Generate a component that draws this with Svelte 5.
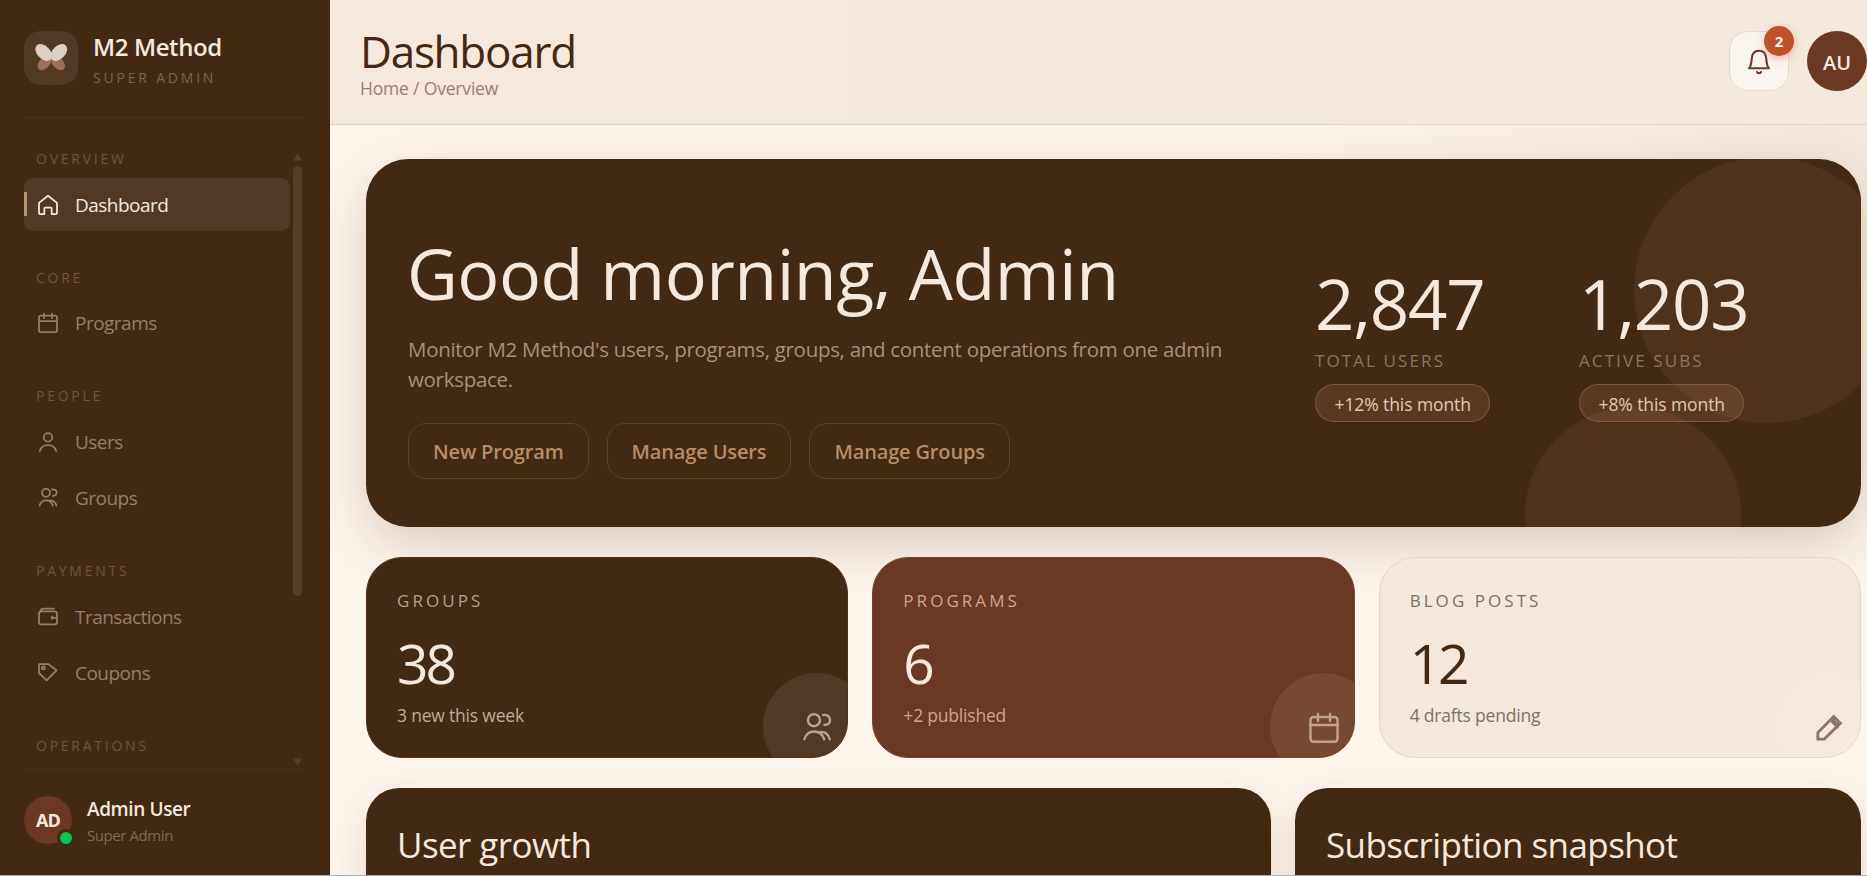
<script>
  const sections = [
    { label: 'OVERVIEW', items: [{ name: 'Dashboard', icon: 'home', active: true }] },
    { label: 'CORE', items: [{ name: 'Programs', icon: 'calendar' }] },
    { label: 'PEOPLE', items: [{ name: 'Users', icon: 'user' }, { name: 'Groups', icon: 'users' }] },
    { label: 'PAYMENTS', items: [{ name: 'Transactions', icon: 'wallet' }, { name: 'Coupons', icon: 'tag' }] },
    { label: 'OPERATIONS', items: [] }
  ];
  const actions = ['New Program', 'Manage Users', 'Manage Groups'];
  const heroStats = [
    { value: '2,847', label: 'TOTAL USERS', trend: '+12% this month' },
    { value: '1,203', label: 'ACTIVE SUBS', trend: '+8% this month' }
  ];
  const cards = [
    { label: 'GROUPS', value: '38', note: '3 new this week', icon: 'users', tone: 'dark' },
    { label: 'PROGRAMS', value: '6', note: '+2 published', icon: 'calendar', tone: 'rust' },
    { label: 'BLOG POSTS', value: '12', note: '4 drafts pending', icon: 'pencil', tone: 'light' }
  ];
</script>

{#snippet icon(name)}
  <svg class="icon" viewBox="0 0 24 24" aria-hidden="true">
    {#if name === 'home'}
      <path d="M3 9.9 12 2.7l9 7.2v10.2a1.1 1.1 0 0 1-1.1 1.1h-4.2v-5.6a1 1 0 0 0-1-1H9.3a1 1 0 0 0-1 1v5.6H4.1A1.1 1.1 0 0 1 3 20.1z" />
    {:else if name === 'calendar'}
      <rect x="3" y="4.7" width="18" height="16.5" rx="2" />
      <path d="M3 10h18M8 2.6v4.6M16 2.6v4.6" />
    {:else if name === 'user'}
      <circle cx="12" cy="7.4" r="4.2" />
      <path d="M3.8 21c1.1-3.9 4.3-6 8.2-6s7.100 2.100 8.200 6" />
    {:else if name === 'users'}
      <circle cx="10" cy="6.8" r="4" />
      <path d="M3.600 19.500c.9-3.300 3.300-5.200 6.400-5.200s5.700 1.900 6.800 5.200M16 3.300c3-.3 4.700 1.200 4.700 3.300s-1.500 3.300-3.800 3.400M14 14.600c3.400-.3 5.600 1.700 6.500 4.900" />
    {:else if name === 'wallet'}
      <rect x="3" y="6.3" width="18" height="13" rx="2.4" />
      <path d="M4.300 6.600c.3-1.900 1.200-3 3-3H18M16 12.800h5" />
      <path class="fill" d="M15 10.600l3.200 1.400v1.600L15 15z" />
    {:else if name === 'tag'}
      <path d="M3 3h9.200l8.300 6.300-9.900 10L3 12z" />
      <circle cx="7.4" cy="6.9" r="1.5" />
    {:else if name === 'pencil'}
      <g stroke-width="1.9" stroke-linejoin="miter" stroke-linecap="butt">
        <path d="M3.900 19.400v-4.400L14.500 4.300l4.400 4.500L8.200 19.400z" />
        <path d="M12.200 6.400l5.300 5.600M14.900 5.400l-.5 1.700 2.200 2.200 2-.4" />
      </g>
    {/if}
  </svg>
{/snippet}

<div class="app">
  <aside class="sidebar">
    <div class="brand">
      <div class="logo">
        <svg viewBox="0 0 54 54" aria-hidden="true">
          <g fill="#a47663" fill-opacity=".9">
            <ellipse cx="20.4" cy="32.2" rx="8.3" ry="5.2" transform="rotate(-45 20.4 32.2)" />
            <ellipse cx="34.1" cy="32.2" rx="8.3" ry="5.2" transform="rotate(45 34.1 32.2)" />
          </g>
          <g fill="#ddd0c2">
            <ellipse cx="19.7" cy="21.5" rx="9.9" ry="6.5" transform="rotate(45 19.7 21.5)" />
            <ellipse cx="34.8" cy="21.5" rx="9.9" ry="6.5" transform="rotate(-45 34.8 21.5)" />
          </g>
        </svg>
      </div>
      <div class="brand-text">
        <strong>M2 Method</strong>
        <span>SUPER ADMIN</span>
      </div>
    </div>

    <div class="nav-wrap">
      <nav>
        {#each sections as section}
          <div class="section">
            <div class="section-label">{section.label}</div>
            <div class="items">
              {#each section.items as item}
                <a class="item" class:active={item.active}>
                  {@render icon(item.icon)}
                  <span>{item.name}</span>
                </a>
              {/each}
            </div>
          </div>
        {/each}
      </nav>
      <div class="scrollbar">
        <svg viewBox="0 0 9 8"><path d="M4.5 0 9 7.5H0z" /></svg>
        <div class="track"><div class="thumb"></div></div>
        <svg viewBox="0 0 9 8"><path d="M0 .5h9L4.5 8z" /></svg>
      </div>
    </div>

    <div class="account">
      <div class="initials">AD<i class="online"></i></div>
      <div class="account-text">
        <strong>Admin User</strong>
        <span>Super Admin</span>
      </div>
    </div>
  </aside>

  <main>
    <header>
      <div>
        <h1>Dashboard</h1>
        <p>Home / Overview</p>
      </div>
      <div class="tools">
        <div class="bell">
          <svg viewBox="0 0 24 26" aria-hidden="true">
            <path d="M2 19.300h20c-2-1.700-2.300-3.800-2.700-9.300C19 4.600 16.300 1.700 12 1.700S5 4.600 4.700 10C4.300 15.500 4 17.600 2 19.300zM10 23c.9 1.700 3.100 1.700 4 0" />
          </svg>
          <b>2</b>
        </div>
        <div class="avatar">AU</div>
      </div>
    </header>

    <div class="content">
      <section class="hero">
        <i class="orb big"></i>
        <i class="orb small"></i>
        <div class="welcome">
          <h2>Good morning, Admin</h2>
          <p>Monitor M2 Method's users, programs, groups, and content operations from one admin workspace.</p>
          <div class="actions">
            {#each actions as action}<button>{action}</button>{/each}
          </div>
        </div>
        <div class="hero-stats">
          {#each heroStats as stat}
            <div>
              <div class="figure">{stat.value}</div>
              <div class="figure-label">{stat.label}</div>
              <span class="trend">{stat.trend}</span>
            </div>
          {/each}
        </div>
      </section>

      <section class="cards">
        {#each cards as card}
          <article class="card {card.tone}">
            <div class="card-label">{card.label}</div>
            <div class="card-value">{card.value}</div>
            <div class="card-note">{card.note}</div>
            <div class="corner"></div>
            <div class="corner-icon">{@render icon(card.icon)}</div>
          </article>
        {/each}
      </section>

      <section class="panels">
        <article class="panel"><h3>User growth</h3></article>
        <article class="panel"><h3>Subscription snapshot</h3></article>
      </section>
    </div>
  </main>
</div>

<style>
  :global(body) { margin: 0; overflow: hidden; }
  .app {
    display: flex;
    box-sizing: border-box;
    width: 1867px;
    height: 876px;
    overflow: hidden;
    border-bottom: 1px solid #b3adaa;
    font-family: "Open Sans", "Noto Sans", sans-serif;
    color: #f5e8dc;
    background: #432812;
  }
  h1, h2, h3, p { margin: 0; font-weight: 400; }
  .icon { display: block; width: 24px; height: 24px; fill: none; stroke: currentColor; stroke-width: 1.75; stroke-linejoin: round; stroke-linecap: round; }
  .icon .fill { fill: currentColor; stroke: none; }

  .sidebar { display: flex; flex-direction: column; flex: none; box-sizing: border-box; width: 330px; padding: 31px 26px 0 24px; background: #432812; }
  .brand { display: flex; gap: 15px; box-sizing: border-box; height: 87px; border-bottom: 1px solid #4e311a; }
  .logo { width: 54px; height: 54px; border-radius: 17px; background: #523923; }
  .logo svg { display: block; }
  .brand-text { display: flex; flex-direction: column; gap: 6px; padding-top: 1px; }
  .brand-text strong { font-size: 24px; line-height: 30px; font-weight: 600; letter-spacing: -.38px; }
  .brand-text span { font-size: 14px; line-height: 20px; letter-spacing: 2.8px; color: #7d6451; }

  .nav-wrap { display: flex; justify-content: space-between; height: 651px; overflow: hidden; }
  nav { width: 266px; padding-top: 31px; }
  .section { margin-bottom: 36.5px; }
  .section-label { height: 20px; margin-bottom: 9px; padding-left: 12px; font-size: 14px; line-height: 20px; letter-spacing: 2.75px; color: #71543c; }
  .items { display: flex; flex-direction: column; gap: 3.5px; }
  .item { display: flex; align-items: center; gap: 15px; box-sizing: border-box; height: 53px; padding-left: 12px; border-radius: 9px; font-size: 19px; font-weight: 500; letter-spacing: -.52px; color: #987e68; }
  .item.active { color: #f5e8dc; background: linear-gradient(90deg, #b8946a 3px, transparent 3px) 0 14px / 100% 24px no-repeat, #523923; }
  .scrollbar { display: flex; flex-direction: column; width: 9px; height: 613px; margin: 35px 2px 0 0; }
  .scrollbar svg { display: block; flex: none; width: 9px; height: 8px; fill: #573d27; }
  .track { flex: 1; padding-top: 5px; }
  .thumb { width: 9px; height: 430px; border-radius: 5px; background: #573c26; }

  .account { display: flex; gap: 15px; padding-top: 26px; border-top: 1px solid #4e311a; }
  .initials { position: relative; width: 48px; height: 48px; border-radius: 50%; background: #6b3823; font-size: 18px; line-height: 49px; font-weight: 700; letter-spacing: -.9px; text-align: center; }
  .online { position: absolute; right: -3px; bottom: -3px; width: 12px; height: 12px; border: 3px solid #432812; border-radius: 50%; background: #00c950; }
  .account-text { display: flex; flex-direction: column; gap: 3px; }
  .account-text strong { font-size: 19px; line-height: 26px; font-weight: 600; letter-spacing: -.4px; }
  .account-text span { font-size: 15px; line-height: 20px; letter-spacing: -.42px; color: #846a55; }

  main { flex: 1; min-width: 0; color: #432812; background: radial-gradient(circle at 100% 0, #ede2d6 0, rgba(243, 232, 220, .7) 260px, rgba(254, 245, 236, 0) 620px), #fef5ec; }
  header { display: flex; justify-content: space-between; box-sizing: border-box; height: 125px; padding: 26px 0 0 30px; border-bottom: 1px solid #e0d4c8; background: linear-gradient(90deg, #f5e9dd, #f3e8dc); }
  h1 { font-size: 44px; line-height: 50px; letter-spacing: -1.25px; }
  header p { font-size: 17.5px; line-height: 24px; letter-spacing: -.18px; color: #9d7e6b; }
  .tools { display: flex; gap: 18px; padding-top: 5px; }
  .bell { position: relative; display: grid; place-items: center; box-sizing: border-box; width: 60px; height: 60px; border: 1px solid #e6dace; border-radius: 19px; background: #fbf5ef; }
  .bell svg { width: 24px; height: 26px; margin-top: 1px; fill: none; stroke: #6b3823; stroke-width: 2.1; stroke-linecap: round; stroke-linejoin: round; }
  .bell b { position: absolute; top: -6px; right: -6px; width: 30px; height: 30px; border-radius: 50%; background: #c0522a; box-shadow: 0 3px 9px rgba(192, 82, 42, .35); color: #fff6ee; font-size: 15px; line-height: 31px; font-weight: 700; text-align: center; }
  .avatar { width: 60px; height: 60px; border-radius: 50%; background: #6b3823; color: #f5e8dc; font-size: 20px; line-height: 63px; font-weight: 600; text-align: center; }

  .content { padding: 34px 6px 0 36px; }
  .hero { position: relative; display: flex; justify-content: space-between; box-sizing: border-box; height: 368px; padding-left: 42px; overflow: hidden; border-radius: 42px; background: #432812; color: #f5e8dc; box-shadow: 0 18px 54px rgba(67, 40, 18, .2); }
  .orb { position: absolute; border-radius: 50%; background: #50321b; }
  .big { top: -2px; right: -39px; width: 266px; height: 266px; }
  .small { top: 248px; right: 120px; width: 216px; height: 216px; }
  .welcome { position: relative; padding-top: 74px; }
  h2 { font-size: 70px; line-height: 80px; letter-spacing: -.55px; margin-left: -1px; }
  .welcome p { width: 832px; margin-top: 21px; font-size: 20.5px; line-height: 30px; letter-spacing: -.3px; color: #a9907b; }
  .actions { display: flex; gap: 18px; margin-top: 29px; }
  button { box-sizing: border-box; height: 56px; padding: 1px 24px 0; border: 1px solid #5d4128; border-radius: 18px; background: transparent; color: #b88c66; font: 600 20px "Open Sans", sans-serif; letter-spacing: -.15px; }
  .hero-stats { position: relative; display: grid; grid-template-columns: 264px 282px; padding-top: 106px; }
  .figure { font-size: 69px; line-height: 76px; letter-spacing: -1.25px; }
  .figure-label { margin-top: 9px; font-size: 17px; line-height: 22px; letter-spacing: 2.1px; color: #8d745f; }
  .trend { display: inline-block; box-sizing: border-box; height: 38px; margin-top: 12px; padding: 0 18.5px; border: 1px solid rgba(184, 130, 95, .4); border-radius: 19px; background: rgba(160, 108, 74, .26); color: #e5c9ad; font-size: 17.5px; line-height: 38px; letter-spacing: -.09px; }

  .cards { display: grid; grid-template-columns: repeat(3, 1fr); gap: 24px; margin-top: 30px; }
  .card { position: relative; box-sizing: border-box; height: 201px; padding: 32px 30px 0; overflow: hidden; border: 1px solid #4e321c; border-radius: 36px; background: #432812; color: #f5e8dc; }
  .card-label { font-size: 17px; line-height: 22px; letter-spacing: 3.05px; color: #b5a08c; }
  .card-value { margin-top: 21px; font-size: 55px; line-height: 60px; letter-spacing: -3px; }
  .card-note { margin-top: 10px; font-size: 17.5px; line-height: 24px; letter-spacing: -.2px; color: #c0ab97; }
  .corner { position: absolute; right: -23px; bottom: -23px; width: 107px; height: 107px; border-radius: 50%; background: #523923; }
  .corner-icon { position: absolute; right: 12px; bottom: 11px; color: #b9a28e; }
  .corner-icon .icon { width: 36px; height: 36px; stroke-width: 1.6; }
  .rust { border-color: #75452f; background: #6b3823; }
  .rust .card-label, .rust .card-note { color: #c9a68c; }
  .rust .corner { background: #774832; }
  .rust .corner-icon { color: #c3a48f; }
  .light { border-color: #e2d5c9; background: #f4e8dc; color: #432812; }
  .light .card-label, .light .card-note { color: #82705f; }
  .light .corner { background: #f5e9de; }
  .light .corner-icon { color: #8c7662; }

  .panels { display: grid; grid-template-columns: 905px 1fr; gap: 24px; margin-top: 30px; }
  .panel { box-sizing: border-box; height: 420px; padding: 33px 31px; border-radius: 33px; background: #432812; color: #f5e8dc; box-shadow: 0 12px 36px rgba(67, 40, 18, .13); }
  h3 { font-size: 35px; line-height: 48px; letter-spacing: -.58px; }
</style>
